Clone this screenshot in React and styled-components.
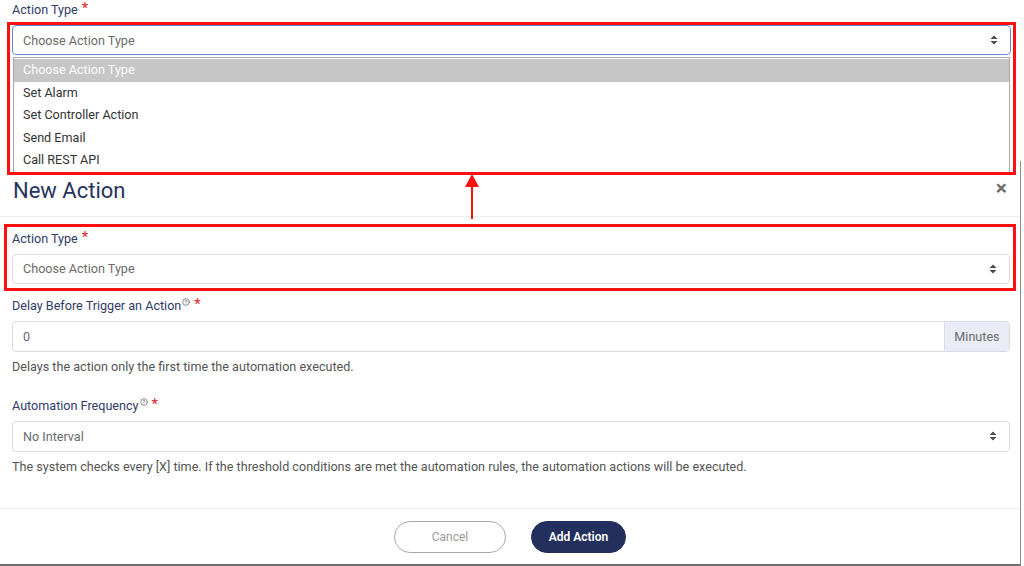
import React from "react";
import styled, { createGlobalStyle } from "styled-components";

const GlobalStyle = createGlobalStyle`
  html, body {
    margin: 0;
    padding: 0;
    background: #ffffff;
  }
  * {
    box-sizing: border-box;
  }
`;

const navy = "#2f3b68";

const Page = styled.div`
  position: relative;
  width: 1024px;
  height: 566px;
  overflow: hidden;
  background: #fff;
  font-family: Roboto, "Liberation Sans", sans-serif;
  font-size: 12.6px;
  color: #333;
  display: flex;
  flex-direction: column;
`;

const TopLabel = styled.div`
  height: 22px;
  padding: 2px 0 0 12px;
`;

const Label = styled.div`
  color: ${navy};
  font-size: 12.6px;
  line-height: 16px;
  display: flex;
  align-items: flex-start;
`;

const Required = styled.span`
  color: #e8262b;
  font-size: 15px;
  line-height: 12px;
  margin-left: 4px;
`;

const HelpMark = styled.svg`
  width: 8px;
  height: 8px;
  margin-left: 1px;
  margin-top: 0;
  color: #555;
`;

const Highlight = styled.div`
  position: relative;
  z-index: 2;
  border: 3px solid #ff1010;
  margin-left: ${(p) => p.left}px;
  width: ${(p) => 1016 - p.left}px;
  padding: ${(p) => p.pad};
  display: flex;
  flex-direction: column;
  gap: ${(p) => p.gap}px;
  background: #fff;
`;

const SelectBox = styled.div`
  height: ${(p) => p.h || 30}px;
  border: 1px solid ${(p) => (p.focus ? "#6e8ad6" : "#d9dce7")};
  border-radius: 4px;
  display: flex;
  align-items: center;
  justify-content: space-between;
  padding: 0 12px 0 10px;
  color: #6b6b6b;
  background: #fff;
`;

const OptionList = styled.div`
  margin-left: 1px;
  margin-right: 1px;
  border: 1px solid #a7a7a7;
  border-bottom: none;
  padding-top: 1px;
  display: flex;
  flex-direction: column;
`;

const Option = styled.div`
  height: 22.5px;
  line-height: 22.5px;
  padding-left: 9px;
  color: ${(p) => (p.active ? "#fbfbfb" : "#333")};
  background: ${(p) => (p.active ? "#c6c6c6" : "#fff")};
`;

const Modal = styled.div`
  flex: 1;
  width: 1021px;
  border-right: 1px solid #8c8c8c;
  border-bottom: 2px solid #6e6e6e;
  display: flex;
  flex-direction: column;
  margin-top: -14px;
  padding-top: 14px;
`;

const ModalHeader = styled.div`
  height: 42px;
  padding: 2px 13px 0 13px;
  display: flex;
  justify-content: space-between;
  align-items: flex-start;
  border-bottom: 1px solid #ececf3;
`;

const Title = styled.h2`
  margin: 0;
  font-size: 22px;
  line-height: 27px;
  font-weight: 400;
  color: #27335e;
`;

const Close = styled.span`
  color: #6f6f6f;
  font-size: 21px;
  font-weight: 700;
  line-height: 22px;
`;

const ModalBody = styled.div`
  padding: 7px 0 0 0;
  display: flex;
  flex-direction: column;
  height: 292px;
  border-bottom: 1px solid #ececf3;
`;

const Field = styled.div`
  padding: 7px 10px 0 12px;
  display: flex;
  flex-direction: column;
  gap: ${(p) => p.gap || 7}px;
  margin-top: ${(p) => p.top || 0}px;
`;

const InputGroup = styled.div`
  height: 31px;
  display: flex;
  border: 1px solid #d9dce7;
  border-radius: 4px;
  overflow: hidden;
`;

const Input = styled.div`
  flex: 1;
  display: flex;
  align-items: center;
  padding-left: 10px;
  color: #6b6b6b;
`;

const Addon = styled.div`
  width: 65px;
  display: flex;
  align-items: center;
  justify-content: center;
  background: #e9ecf4;
  border-left: 1px solid #d9dce7;
  color: #6b6b6b;
`;

const Help = styled.div`
  color: #555;
  line-height: 18px;
  margin-top: -1px;
`;

const Footer = styled.div`
  flex: 1;
  display: flex;
  justify-content: center;
  align-items: flex-start;
  gap: 25px;
  padding: 12px 0 0 0;
`;

const Button = styled.button`
  height: 32px;
  width: ${(p) => p.w}px;
  border-radius: 16px;
  font-family: inherit;
  font-size: 12px;
  cursor: pointer;
  border: 1px solid ${(p) => (p.primary ? "#232f5c" : "#a9a9b3")};
  background: ${(p) => (p.primary ? "#232f5c" : "#fff")};
  color: ${(p) => (p.primary ? "#fff" : "#9a9a9a")};
  font-weight: ${(p) => (p.primary ? 600 : 400)};
`;

const Arrow = styled.svg`
  position: absolute;
  left: 464px;
  top: 174px;
  width: 16px;
  height: 46px;
  z-index: 3;
`;

const Caret = () => (
  <svg width="8" height="10" viewBox="0 0 8 10">
    <path d="M4 0.5 L7.5 4 H0.5 Z" fill="#4a4a4a" />
    <path d="M4 9.5 L7.5 6 H0.5 Z" fill="#4a4a4a" />
  </svg>
);

const Tip = () => (
  <HelpMark viewBox="0 0 24 24" fill="none" stroke="currentColor" strokeWidth="2" strokeLinecap="round">
    <circle cx="12" cy="12" r="10" />
    <path d="M9.09 9a3 3 0 0 1 5.83 1c0 2-3 3-3 3" />
    <path d="M12 17h.01" />
  </HelpMark>
);

const options = ["Choose Action Type", "Set Alarm", "Set Controller Action", "Send Email", "Call REST API"];

export default function App() {
  return (
    <Page>
      <GlobalStyle />
      <TopLabel>
        <Label>
          Action Type<Required>*</Required>
        </Label>
      </TopLabel>
      <Highlight left={7} pad="0 2px 0 2px" gap={2}>
        <SelectBox focus>
          <span>Choose Action Type</span>
          <Caret />
        </SelectBox>
        <OptionList>
          {options.map((o, i) => (
            <Option key={o} active={i === 0}>
              {o}
            </Option>
          ))}
        </OptionList>
      </Highlight>

      <Modal>
        <ModalHeader>
          <Title>New Action</Title>
          <Close>×</Close>
        </ModalHeader>
        <ModalBody>
          <Highlight left={4} pad="4px 3px 4px 5px" gap={7}>
            <Label>
              Action Type<Required>*</Required>
            </Label>
            <SelectBox>
              <span>Choose Action Type</span>
              <Caret />
            </SelectBox>
          </Highlight>
          <Field top={0}>
            <Label>
              Delay Before Trigger an Action<Tip />
              <Required>*</Required>
            </Label>
            <InputGroup>
              <Input>0</Input>
              <Addon>Minutes</Addon>
            </InputGroup>
            <Help>Delays the action only the first time the automation executed.</Help>
          </Field>
          <Field top={15}>
            <Label>
              Automation Frequency<Tip />
              <Required>*</Required>
            </Label>
            <SelectBox h={31}>
              <span>No Interval</span>
              <Caret />
            </SelectBox>
            <Help>
              The system checks every [X] time. If the threshold conditions are met the automation rules, the
              automation actions will be executed.
            </Help>
          </Field>
        </ModalBody>
        <Footer>
          <Button w={112}>Cancel</Button>
          <Button primary w={95}>
            Add Action
          </Button>
        </Footer>
      </Modal>

      <Arrow viewBox="0 0 16 46">
        <path d="M8 0 L15 13 H1 Z" fill="#ff1010" />
        <rect x="7" y="12" width="2" height="33" fill="#ff1010" />
      </Arrow>
    </Page>
  );
}
